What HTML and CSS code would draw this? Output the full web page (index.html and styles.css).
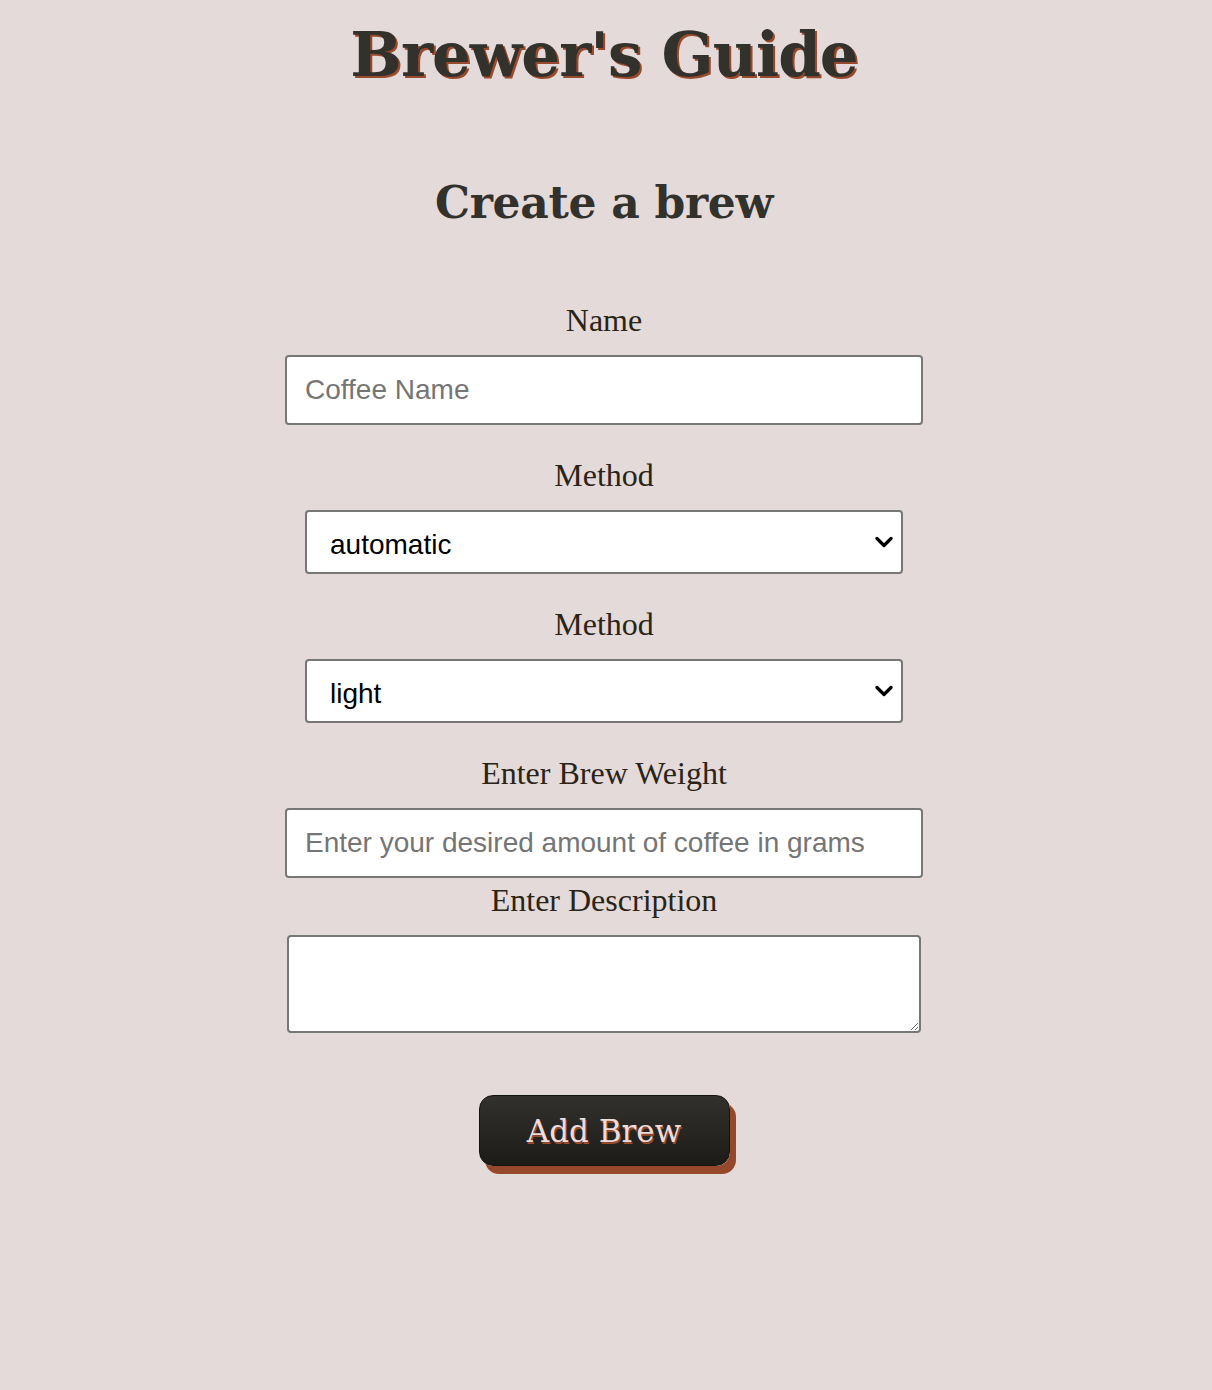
FILE: index.html
```html
<!DOCTYPE html>
<html lang="en">
<head>
<meta charset="utf-8">
<title>Brewer's Guide</title>
<link rel="stylesheet" href="styles.css">
</head>
<body>
<header class="site-header">
  <h1 class="site-title">Brewer's Guide</h1>
</header>
<main class="page">
  <h2 class="form-title">Create a brew</h2>
  <form class="brew-form">
    <div class="field">
      <label class="field-label" for="name">Name</label>
      <input class="text-input" id="name" type="text" placeholder="Coffee Name">
    </div>
    <div class="field">
      <label class="field-label" for="method">Method</label>
      <select class="select-input" id="method">
        <option>automatic</option>
        <option>pour over</option>
        <option>french press</option>
      </select>
    </div>
    <div class="field">
      <label class="field-label" for="roast">Method</label>
      <select class="select-input" id="roast">
        <option>light</option>
        <option>medium</option>
        <option>dark</option>
      </select>
    </div>
    <div class="field field-tight">
      <label class="field-label" for="weight">Enter Brew Weight</label>
      <input class="text-input" id="weight" type="text" placeholder="Enter your desired amount of coffee in grams">
    </div>
    <div class="field field-last">
      <label class="field-label" for="desc">Enter Description</label>
      <textarea class="text-area" id="desc"></textarea>
    </div>
    <button class="add-button" type="button">Add Brew</button>
  </form>
</main>
</body>
</html>
```
FILE: styles.css
```css
html {
  background: #e4dad9;
}
body {
  margin: 8px 12px 8px 8px;
  background: #e4dad9;
  font-family: "Liberation Serif", serif;
  color: #2a2416;
}
.site-header {
  display: flex;
  justify-content: center;
}
.site-title {
  margin: 14px 0 0;
  font-family: "DejaVu Serif", serif;
  font-weight: bold;
  font-size: 61px;
  line-height: 66px;
  letter-spacing: -1px;
  color: #33312c;
  text-shadow: 2px 2px 0 #9a4a2c;
}
.page {
  display: flex;
  flex-direction: column;
  align-items: center;
}
.form-title {
  margin: 89px 0 73px;
  font-family: "DejaVu Serif", serif;
  font-weight: bold;
  font-size: 44px;
  line-height: 52px;
  letter-spacing: -0.3px;
  color: #33312c;
}
.brew-form {
  display: flex;
  flex-direction: column;
  align-items: center;
}
.field {
  display: flex;
  flex-direction: column;
  align-items: center;
  margin-bottom: 32px;
}
.field-tight {
  margin-bottom: 4px;
}
.field-last {
  margin-bottom: 62px;
}
.field-label {
  font-size: 32px;
  line-height: 37px;
  margin-bottom: 16px;
  color: #2a2416;
}
.text-input {
  box-sizing: border-box;
  width: 638px;
  height: 70px;
  padding: 0 18px;
  border: 2px solid #777;
  border-radius: 4px;
  background: #fff;
  font-family: "Liberation Sans", Arial, sans-serif;
  font-size: 28px;
  color: #000;
  outline: none;
}
.text-input::placeholder {
  color: #757575;
}
.select-input {
  box-sizing: border-box;
  width: 598px;
  height: 64px;
  padding: 4px 44px 0 23px;
  border: 2px solid #777;
  border-radius: 4px;
  background-color: #fff;
  background-image: url("data:image/svg+xml,%3Csvg xmlns='http://www.w3.org/2000/svg' width='18' height='12' viewBox='0 0 18 12'%3E%3Cpath d='M2 2.5 L9 9.5 L16 2.5' fill='none' stroke='%23000' stroke-width='3.2' stroke-linecap='round' stroke-linejoin='round'/%3E%3C/svg%3E");
  background-repeat: no-repeat;
  background-position: right 8px center;
  background-size: 18px 12px;
  -webkit-appearance: none;
  appearance: none;
  font-family: "Liberation Sans", Arial, sans-serif;
  font-size: 28px;
  color: #000;
  outline: none;
}
.text-area {
  box-sizing: border-box;
  width: 634px;
  height: 98px;
  border: 2px solid #777;
  border-radius: 4px;
  background: #fff;
  font-family: "Liberation Sans", Arial, sans-serif;
  font-size: 20px;
  outline: none;
}
.add-button {
  box-sizing: border-box;
  width: 251px;
  height: 71px;
  margin-bottom: 10px;
  border: 1px solid #151310;
  border-radius: 14px;
  background: linear-gradient(#33312d, #1d1b18);
  box-shadow: 6px 8px 0 #96482a;
  font-family: "DejaVu Serif", serif;
  font-size: 31px;
  color: #ecdcdc;
  text-shadow: 1px 2px 0 #9a4a2c;
  cursor: pointer;
}
```
